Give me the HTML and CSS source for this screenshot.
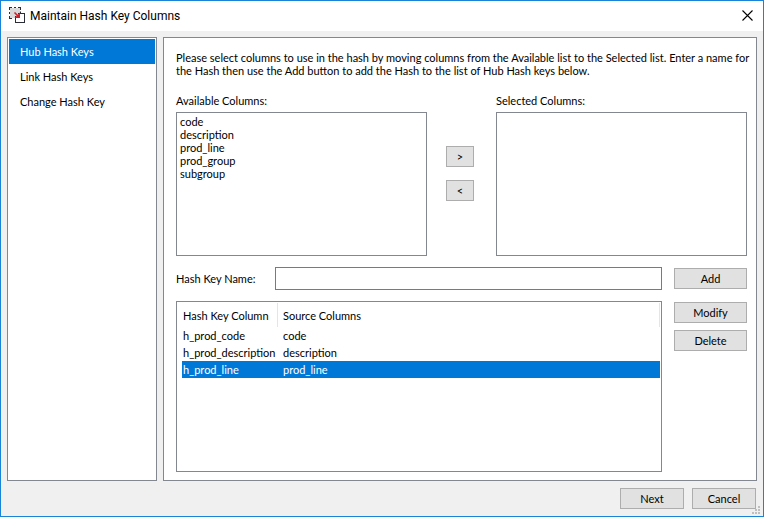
FILE: index.html
```html
<!DOCTYPE html>
<html lang="en">
    <head>
        <meta charset="utf-8">
        <title>Maintain Hash Key Columns</title>
        <link rel="stylesheet" href="styles.css">
    </head>
    <body>
        <div class="window">
            <header class="titlebar">
                <svg class="logo" width="16" height="16" viewBox="0 0 16 16">
                    <rect x="1" y="1" width="10" height="10" fill="#d9d9d9"/>
                    <path d="M0 .5H3M5 .5H7M9 .5H12M.5 0V3M.5 5V7M.5 9V12M0 11.500H3M11.500 0V3M11.500 4.500V6" fill="none" stroke="#2b2d36"/>
                    <path d="M6 6H16V16H6z" fill="#2b2d36"/>
                    <path d="M7 7H15V15H7z" fill="#fff"/>
                    <path d="M5 5H9V9H5z" fill="#d9d9d9"/>
                    <path d="M5.500 5.500L10 10" stroke="#c8232c" stroke-width="1.600"/>
                    <path d="M11 5.500V11H5.500z" fill="#c8232c"/>
                </svg>
                <h1>Maintain Hash Key Columns</h1>
                <button class="close" type="button" aria-label="Close">
                    <svg width="11" height="11" viewBox="0 0 11 11"><path d="M.5 .5L10.500 10.500M10.500 .5L.5 10.500" stroke="#000" stroke-width="1.100"/></svg>
                </button>
            </header>

            <div class="content">
                <nav class="sidebar">
                    <a class="active" href="#hub">Hub Hash Keys</a>
                    <a href="#link">Link Hash Keys</a>
                    <a href="#change">Change Hash Key</a>
                </nav>

                <main class="panel" id="hub">
                    <p>Please select columns to use in the hash by moving columns from the Available list to the Selected list. Enter a name for the Hash then use the Add button to add the Hash to the list of Hub Hash keys below.</p>

                    <div class="picker">
                        <div class="list">
                            <label for="available">Available Columns:</label>
                            <select id="available" multiple>
                                <option>code</option>
                                <option>description</option>
                                <option>prod_line</option>
                                <option>prod_group</option>
                                <option>subgroup</option>
                            </select>
                        </div>
                        <div class="arrows">
                            <button class="btn" type="button">&gt;</button>
                            <button class="btn" type="button">&lt;</button>
                        </div>
                        <div class="list">
                            <label for="selected">Selected Columns:</label>
                            <select id="selected" multiple></select>
                        </div>
                    </div>

                    <div class="name-row">
                        <label for="keyname">Hash Key Name:</label>
                        <input id="keyname" type="text">
                        <button class="btn" type="button">Add</button>
                    </div>

                    <div class="keys">
                        <div class="keys-box">
                            <table>
                                <thead>
                                    <tr><th class="first">Hash Key Column</th><th>Source Columns</th></tr>
                                </thead>
                                <tbody>
                                    <tr><td>h_prod_code</td><td>code</td></tr>
                                    <tr><td>h_prod_description</td><td>description</td></tr>
                                    <tr class="active"><td>h_prod_line</td><td>prod_line</td></tr>
                                </tbody>
                            </table>
                        </div>
                        <div class="keys-actions">
                            <button class="btn" type="button">Modify</button>
                            <button class="btn" type="button">Delete</button>
                        </div>
                    </div>
                </main>
            </div>

            <footer class="footer">
                <button class="btn" type="button">Next</button>
                <button class="btn" type="button">Cancel</button>
            </footer>
            <svg class="grip" width="8" height="8" viewBox="0 0 8 8" shape-rendering="crispEdges">
                <path d="M6 0h2v2h-2zM3 3h2v2h-2zM6 3h2v2h-2zM0 6h2v2h-2zM3 6h2v2h-2zM6 6h2v2h-2z" fill="#bfbfbf"/>
            </svg>
        </div>
    </body>
</html>
```

FILE: styles.css
```css
* {
    box-sizing: border-box;
}

body {
    margin: 0;
    font-family: Lato, sans-serif;
    font-size: 11px;
    line-height: 13px;
    color: #000;
}

button, input, select {
    font: inherit;
    color: inherit;
}

.window {
    position: relative;
    display: flex;
    flex-direction: column;
    min-height: 100vh;
    border: 1px solid #1883d7;
    background: #f0f0f0;
}

.titlebar {
    display: flex;
    align-items: center;
    height: 30px;
    padding: 0 10px 0 8px;
    background: #fff;
}

.logo {
    margin-bottom: 2px;
}

.titlebar h1 {
    flex: 1;
    margin: 0 0 0 5px;
    font-family: Roboto, sans-serif;
    font-size: 12px;
    font-weight: normal;
}

.close {
    display: flex;
    padding: 0 0 2px;
    border: 0;
    background: none;
}

.content {
    flex: 1;
    display: flex;
    gap: 6px;
    padding: 6px 6px 0;
}

.sidebar {
    width: 150px;
    padding: 1px;
    border: 1px solid #828790;
    background: #fff;
}

.sidebar a {
    display: block;
    padding: 6px 11px;
    color: #000;
    text-decoration: none;
}

.sidebar a.active {
    background: #0078d7;
    color: #fff;
}

.panel {
    flex: 1;
    display: flex;
    flex-direction: column;
    padding: 13px 9px 8px 12px;
    border: 1px solid #828790;
    background: #fff;
}

.panel p {
    margin: 0 -6px 0 0;
}

.picker {
    display: grid;
    grid-template-columns: 1fr 69px 1fr;
    margin-top: 17px;
}

.list label {
    display: block;
    margin-bottom: 5px;
}

.list select {
    display: block;
    width: 100%;
    height: 144px;
    padding: 2px 1px;
    border: 1px solid #828790;
    border-radius: 0;
    background: #fff;
    overflow: hidden;
}

.list option {
    min-height: 13px;
    padding: 0 2px;
    line-height: 13px;
}

.arrows {
    display: flex;
    flex-direction: column;
    align-items: center;
    gap: 13px;
    padding: 52px 3px 0 0;
}

.btn {
    height: 21px;
    padding: 0;
    border: 1px solid #adadad;
    border-radius: 0;
    background: #e1e1e1;
}

.arrows .btn {
    width: 28px;
}

.name-row {
    display: flex;
    align-items: center;
    margin-top: 11px;
}

.name-row label {
    width: 99px;
}

.name-row input {
    flex: 1;
    height: 23px;
    padding: 0 4px;
    border: 1px solid #7a7a7a;
}

.name-row .btn {
    width: 73px;
    margin-left: 12px;
}

.keys {
    flex: 1;
    display: flex;
    gap: 12px;
    margin-top: 11px;
}

.keys-box {
    flex: 1;
    padding: 1px 1px 0 5px;
    border: 1px solid #828790;
}

.keys table {
    width: 100%;
    table-layout: fixed;
    border-collapse: separate;
    border-spacing: 0;
}

.keys th {
    height: 24px;
    padding: 0 0 0 5px;
    border-right: 1px solid #e5e5e5;
    font-weight: normal;
    text-align: left;
}

.keys th.first {
    width: 96px;
}

.keys td {
    height: 17px;
    padding: 0 0 0 5px;
    white-space: nowrap;
}

.keys th:first-child,
.keys td:first-child {
    padding-left: 1px;
}

.keys tr.active {
    background: #0078d7;
    color: #fff;
}

.keys-actions {
    display: flex;
    flex-direction: column;
    gap: 7px;
    width: 73px;
    padding-top: 1px;
}

.footer {
    display: flex;
    justify-content: flex-end;
    gap: 8px;
    padding: 7px 7px;
}

.footer .btn {
    width: 64px;
}

.grip {
    position: absolute;
    right: 3px;
    bottom: 2px;
}
```
